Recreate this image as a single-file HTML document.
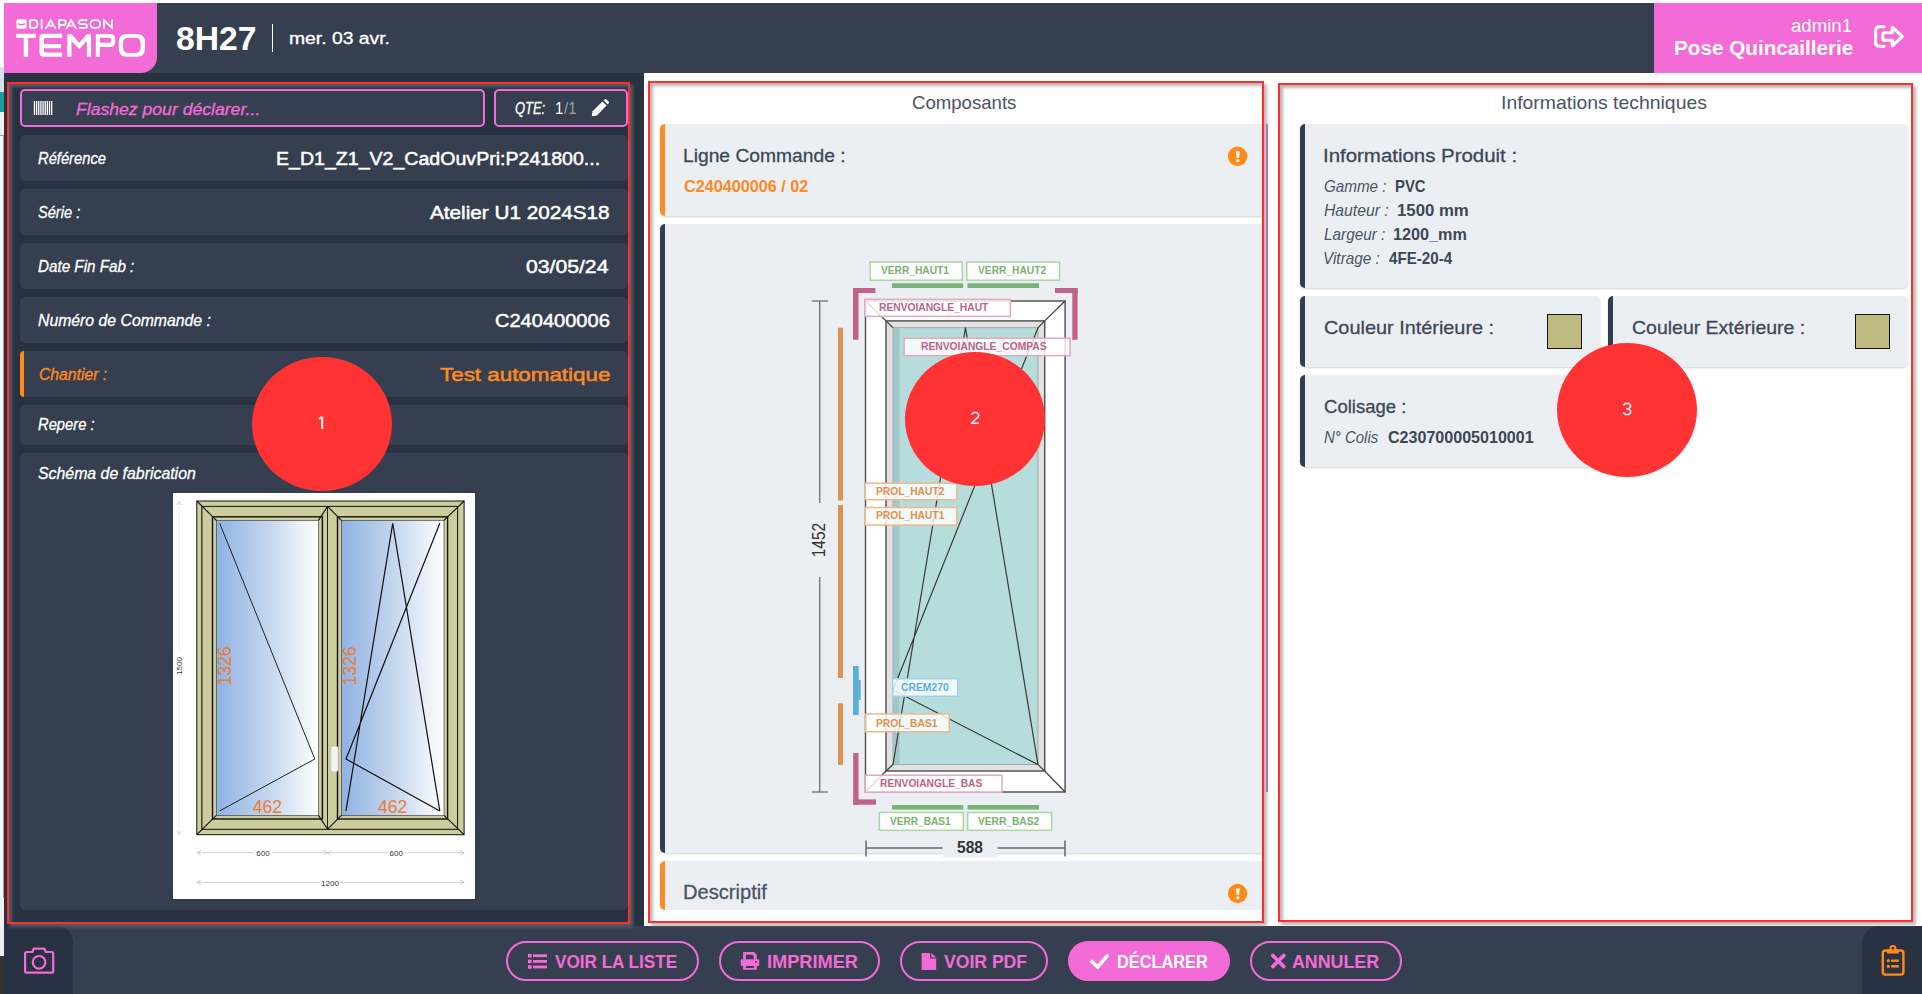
<!DOCTYPE html>
<html><head><meta charset="utf-8"><style>
html,body{margin:0;padding:0}
body{width:1922px;height:994px;position:relative;overflow:hidden;background:#fff;font-family:"Liberation Sans",sans-serif}
body>div,body>svg{position:absolute}
.t{position:absolute;white-space:nowrap;line-height:1;transform-origin:0 0}
</style></head><body>
<div style="left:0px;top:67px;width:4px;height:25px;background:#D6E0E8"></div><div style="left:0px;top:92px;width:4px;height:20px;background:#1B9BA1"></div><div style="left:0px;top:112px;width:4px;height:23px;background:linear-gradient(#F4F4F4,#EEEEEE)"></div><div style="left:-1px;top:135px;width:3px;height:763px;border:1px solid #9A9A9A;background:#fff"></div><div style="left:0px;top:898px;width:4px;height:34px;background:#F0F0F0"></div><div style="left:0px;top:932px;width:4px;height:24px;background:#EAF0F5"></div><div style="left:0px;top:956px;width:4px;height:38px;background:#333"></div><div style="left:4px;top:3px;width:1918px;height:70px;background:#363F4F"></div><div style="left:4px;top:3px;width:153px;height:70px;background:#F26BD6;border-bottom-right-radius:16px"></div><div style="left:1654px;top:3px;width:268px;height:70px;background:#F26BD6"></div><div style="left:272px;top:24px;width:1px;height:28px;background:#fff"></div><div style="left:4px;top:73px;width:640px;height:853px;background:#283241"></div><div style="left:644px;top:73px;width:1278px;height:853px;background:#fff"></div><div style="left:4px;top:926px;width:1918px;height:68px;background:#363F4F"></div><div style="left:4px;top:926px;width:69px;height:68px;background:#283241;border-top-right-radius:16px"></div><div style="left:1862px;top:926px;width:60px;height:68px;background:#283241;border-top-left-radius:18px"></div><div style="left:20px;top:89px;width:465px;height:38px;box-sizing:border-box;border:2px solid #F26BD6;border-radius:5px;background:#363F4F"></div><div style="left:494px;top:89px;width:134px;height:38px;box-sizing:border-box;border:2px solid #F26BD6;border-radius:5px;background:#363F4F"></div><div style="left:20px;top:135px;width:608px;height:46px;background:#363F4F;border-radius:5px"></div><div style="left:20px;top:189px;width:608px;height:46px;background:#363F4F;border-radius:5px"></div><div style="left:20px;top:243px;width:608px;height:46px;background:#363F4F;border-radius:5px"></div><div style="left:20px;top:297px;width:608px;height:46px;background:#363F4F;border-radius:5px"></div><div style="left:20px;top:351px;width:608px;height:46px;background:#363F4F;border-radius:5px"></div><div style="left:20px;top:405px;width:608px;height:40px;background:#363F4F;border-radius:5px"></div><div style="left:20px;top:453px;width:608px;height:457px;background:#363F4F;border-radius:5px"></div><div style="left:20px;top:351px;width:4px;height:46px;background:#FF8A1F;border-radius:5px 0 0 5px"></div><div style="left:173px;top:493px;width:302px;height:406px;background:#fff"></div><div style="left:660px;top:124px;width:602px;height:92px;background:#EBEFF3;box-shadow:0 1px 2px rgba(0,0,0,.18);border-radius:5px 0 0 5px"></div><div style="left:660px;top:124px;width:5px;height:92px;background:#FF8A1F;border-radius:5px 0 0 5px"></div><div style="left:660px;top:224px;width:602px;height:629px;background:#EBEFF3;box-shadow:0 1px 2px rgba(0,0,0,.18);border-radius:5px 0 0 5px"></div><div style="left:660px;top:224px;width:5px;height:629px;background:#333D4D;border-radius:5px 0 0 5px"></div><div style="left:660px;top:861px;width:602px;height:49px;background:#EBEFF3;border-radius:5px 0 0 5px"></div><div style="left:660px;top:861px;width:5px;height:49px;background:#FF8A1F;border-radius:5px 0 0 5px"></div><div style="left:1266px;top:124px;width:2px;height:668px;background:#D66AC2"></div><div style="left:1300px;top:124px;width:608px;height:164px;background:#EBEFF3;box-shadow:0 1px 2px rgba(0,0,0,.18);border-radius:5px"></div><div style="left:1300px;top:124px;width:5px;height:164px;background:#333D4D;border-radius:5px 0 0 5px"></div><div style="left:1300px;top:296px;width:300px;height:71px;background:#EBEFF3;box-shadow:0 1px 2px rgba(0,0,0,.18);border-radius:5px"></div><div style="left:1300px;top:296px;width:5px;height:71px;background:#333D4D;border-radius:5px 0 0 5px"></div><div style="left:1608px;top:296px;width:300px;height:71px;background:#EBEFF3;box-shadow:0 1px 2px rgba(0,0,0,.18);border-radius:5px"></div><div style="left:1608px;top:296px;width:5px;height:71px;background:#333D4D;border-radius:5px 0 0 5px"></div><div style="left:1300px;top:375px;width:300px;height:92px;background:#EBEFF3;box-shadow:0 1px 2px rgba(0,0,0,.18);border-radius:5px"></div><div style="left:1300px;top:375px;width:5px;height:92px;background:#333D4D;border-radius:5px 0 0 5px"></div><div style="left:1547px;top:314px;width:35px;height:35px;box-sizing:border-box;background:#BDBB80;border:1.5px solid #111"></div><div style="left:1855px;top:314px;width:35px;height:35px;box-sizing:border-box;background:#BDBB80;border:1.5px solid #111"></div><div style="left:506px;top:941px;width:193px;height:40px;box-sizing:border-box;border:2px solid #F26BD6;border-radius:20px"></div><div style="left:719px;top:941px;width:161px;height:40px;box-sizing:border-box;border:2px solid #F26BD6;border-radius:20px"></div><div style="left:900px;top:941px;width:148px;height:40px;box-sizing:border-box;border:2px solid #F26BD6;border-radius:20px"></div><div style="left:1068px;top:941px;width:162px;height:40px;background:#F26BD6;border-radius:20px"></div><div style="left:1250px;top:941px;width:152px;height:40px;box-sizing:border-box;border:2px solid #F26BD6;border-radius:20px"></div><svg style="left:0;top:0;position:absolute" width="1922" height="994" viewBox="0 0 1922 994"><defs><linearGradient id="gl" x1="0" x2="1" y1="0" y2="0"><stop offset="0" stop-color="#8FB2E3"/><stop offset="0.55" stop-color="#C9D9EF"/><stop offset="1" stop-color="#FFFFFF"/></linearGradient></defs><rect x="196.8" y="501" width="267.3" height="333.7" fill="#CDCC9C" stroke="#111" stroke-width="1"/><rect x="202" y="506.4" width="255.6" height="322.8" fill="#CDCC9C" stroke="#111" stroke-width="1"/><rect x="202" y="506.4" width="125.6" height="322.8" fill="#CDCC9C" stroke="#111" stroke-width="0.8"/><rect x="212.5" y="516.8" width="109.9" height="302.2" fill="#CDCC9C" stroke="#111" stroke-width="1.4"/><rect x="216.4" y="520.4" width="102.1" height="295" fill="url(#gl)" stroke="#333" stroke-width="0.6"/><rect x="327.6" y="506.4" width="130" height="322.8" fill="#CDCC9C" stroke="#111" stroke-width="0.8"/><rect x="337.5" y="516.8" width="110.1" height="302.2" fill="#CDCC9C" stroke="#111" stroke-width="1.4"/><rect x="341.4" y="520.4" width="102.6" height="295" fill="url(#gl)" stroke="#333" stroke-width="0.6"/><line x1="196.8" y1="501" x2="216.4" y2="520.4" stroke="#111" stroke-width="1.1"/><line x1="464.1" y1="501" x2="444" y2="520.4" stroke="#111" stroke-width="1.1"/><line x1="196.8" y1="834.7" x2="216.4" y2="815.4" stroke="#111" stroke-width="1.1"/><line x1="464.1" y1="834.7" x2="444" y2="815.4" stroke="#111" stroke-width="1.1"/><line x1="327.6" y1="506.4" x2="318.5" y2="520.4" stroke="#111" stroke-width="1.1"/><line x1="327.6" y1="506.4" x2="341.4" y2="520.4" stroke="#111" stroke-width="1.1"/><line x1="327.6" y1="829.2" x2="318.5" y2="815.4" stroke="#111" stroke-width="1.1"/><line x1="327.6" y1="829.2" x2="341.4" y2="815.4" stroke="#111" stroke-width="1.1"/><path d="M219.7 523.3 L314.8 759 L219.7 810.9" fill="none" stroke="#222" stroke-width="1"/><path d="M392.7 523.3 L346 810.9 M392.7 523.3 L439.8 810.9 M439.8 523.3 L346 759 L439.8 810.9" fill="none" stroke="#111" stroke-width="1.2"/><rect x="330.8" y="746" width="7.4" height="26" rx="3" fill="#F4F4F4" stroke="#C8C8C8" stroke-width="0.8"/><line x1="179.2" y1="501" x2="179.2" y2="834.7" stroke="#E6E6E6" stroke-width="0.7"/><g stroke="#BBBBBB" stroke-width="0.7" fill="none"><line x1="196.8" y1="852.7" x2="464.1" y2="852.7"/><line x1="196.8" y1="882.3" x2="464.1" y2="882.3"/><path d="M177 505 L179.2 501 L181.4 505 M177 830.7 L179.2 834.7 L181.4 830.7 M200.8 850.5 L196.8 852.7 L200.8 854.9 M460.1 850.5 L464.1 852.7 L460.1 854.9 M200.8 880.1 L196.8 882.3 L200.8 884.5 M460.1 880.1 L464.1 882.3 L460.1 884.5 M323.6 850.5 L327.6 852.7 L323.6 854.9 M331.6 850.5 L327.6 852.7 L331.6 854.9"/></g><rect x="254" y="849" width="18" height="7" fill="#fff"/><rect x="388" y="849" width="17" height="7" fill="#fff"/><rect x="320" y="878.5" width="20" height="7" fill="#fff"/><rect x="175.5" y="653" width="7" height="25" fill="#fff"/><g font-family="Liberation Sans" font-size="8" fill="#333"><text x="263" y="855.8" text-anchor="middle">600</text><text x="396.3" y="855.8" text-anchor="middle">600</text><text x="330" y="885.7" text-anchor="middle">1200</text><text transform="translate(181.8 666) rotate(-90)" text-anchor="middle">1500</text></g><g font-family="Liberation Sans" font-size="17.5" fill="#F07A2E"><text x="267.3" y="813" text-anchor="middle">462</text><text x="392.7" y="813" text-anchor="middle">462</text><text transform="translate(231 666) rotate(-90)" text-anchor="middle">1326</text><text transform="translate(356.4 666) rotate(-90)" text-anchor="middle">1326</text></g><g stroke="#777" stroke-width="1.4"><line x1="819.7" y1="301" x2="819.7" y2="503"/><line x1="819.7" y1="577" x2="819.7" y2="792"/><line x1="811.8" y1="301" x2="828" y2="301"/><line x1="811.8" y1="792" x2="828" y2="792"/></g><g fill="#E0914F"><rect x="838" y="327.7" width="5" height="172.8"/><rect x="838" y="505" width="5" height="173"/><rect x="838" y="703.3" width="5" height="61.7"/></g><g fill="#5AAEDC"><rect x="853" y="666" width="5.7" height="49"/><rect x="858.5" y="680" width="2.2" height="20"/></g><g fill="#C0628A"><rect x="853" y="288" width="5.5" height="51.8"/><rect x="853" y="288" width="22.4" height="5"/><rect x="1072.3" y="288" width="5.3" height="51.8"/><rect x="1055" y="288" width="22.6" height="5"/><rect x="853.2" y="753" width="5.3" height="51.7"/><rect x="853.2" y="799.4" width="22.8" height="5.3"/></g><g fill="#7DB37A"><rect x="892" y="283.2" width="71.2" height="4.8"/><rect x="967.5" y="283.2" width="71.5" height="4.8"/><rect x="892" y="805" width="71.3" height="4.6"/><rect x="967.5" y="805" width="71.5" height="4.6"/></g><rect x="865.5" y="301" width="199.6" height="491" fill="#fff" stroke="#555" stroke-width="1.5"/><rect x="886" y="320.9" width="158.7" height="450.1" fill="#E2E2E2" stroke="#555" stroke-width="1.5"/><rect x="893" y="327.7" width="145" height="436.9" fill="#B6DCDC" stroke="#9A9A9A" stroke-width="0.8"/><rect x="893.4" y="328.1" width="6.2" height="436.1" fill="#A2C7C7"/><line x1="865.5" y1="301" x2="886" y2="320.9" stroke="#444" stroke-width="1.3"/><line x1="1065.1" y1="301" x2="1044.7" y2="320.9" stroke="#444" stroke-width="1.3"/><line x1="865.5" y1="792" x2="886" y2="771" stroke="#444" stroke-width="1.3"/><line x1="1065.1" y1="792" x2="1044.7" y2="771" stroke="#444" stroke-width="1.3"/><line x1="886" y1="320.9" x2="893" y2="327.7" stroke="#444" stroke-width="1.3"/><line x1="1044.7" y1="320.9" x2="1038" y2="327.7" stroke="#444" stroke-width="1.3"/><line x1="886" y1="771" x2="893" y2="764.6" stroke="#444" stroke-width="1.3"/><line x1="1044.7" y1="771" x2="1038" y2="764.6" stroke="#444" stroke-width="1.3"/><path d="M965.5 327.7 L893 764.6 M965.5 327.7 L1038 764.6 M1038 327.7 L893 690 L1038 764.6" fill="none" stroke="#3A3A3A" stroke-width="1.2"/><rect x="870.15" y="262.05" width="92.10000000000002" height="18.19999999999999" fill="rgba(255,255,255,0.82)" stroke="#ACD5A5" stroke-width="1.5"/><rect x="966.75" y="262.05" width="92.79999999999995" height="18.19999999999999" fill="rgba(255,255,255,0.82)" stroke="#ACD5A5" stroke-width="1.5"/><rect x="864.75" y="299.35" width="145.70000000000005" height="17.0" fill="rgba(255,255,255,0.82)" stroke="#E3A9C2" stroke-width="1.5"/><rect x="904.15" y="338.25" width="165.89999999999998" height="17.399999999999977" fill="rgba(255,255,255,0.82)" stroke="#E3A9C2" stroke-width="1.5"/><rect x="865.05" y="483.15" width="91.80000000000007" height="16.600000000000023" fill="rgba(255,255,255,0.82)" stroke="#EDB98C" stroke-width="1.5"/><rect x="865.05" y="507.55" width="91.80000000000007" height="17.499999999999943" fill="rgba(255,255,255,0.82)" stroke="#EDB98C" stroke-width="1.5"/><rect x="892.65" y="678.75" width="65.0" height="17.5" fill="rgba(255,255,255,0.82)" stroke="#9FD0EE" stroke-width="1.5"/><rect x="865.75" y="713.95" width="83.5" height="17.799999999999955" fill="rgba(255,255,255,0.82)" stroke="#EDB98C" stroke-width="1.5"/><rect x="865.15" y="775.25" width="136.89999999999998" height="17.0" fill="rgba(255,255,255,0.82)" stroke="#E3A9C2" stroke-width="1.5"/><rect x="879.35" y="812.45" width="84.0" height="17.899999999999977" fill="rgba(255,255,255,0.82)" stroke="#ACD5A5" stroke-width="1.5"/><rect x="967.65" y="812.45" width="84.00000000000011" height="17.899999999999977" fill="rgba(255,255,255,0.82)" stroke="#ACD5A5" stroke-width="1.5"/><g stroke="#666" stroke-width="1.5"><line x1="866" y1="848" x2="1065" y2="848"/><line x1="866" y1="840.6" x2="866" y2="856.5"/><line x1="1065" y1="840.6" x2="1065" y2="856.5"/></g><rect x="942.6" y="838" width="55" height="19.5" fill="#EBEFF3"/><rect x="810" y="503" width="20" height="74" fill="#EBEFF3"/><text transform="translate(825.4 557.3) rotate(-90)" font-family="Liberation Sans" font-size="18" fill="#333" textLength="34.4" lengthAdjust="spacingAndGlyphs">1452</text><circle cx="1237.6" cy="156.3" r="9.7" fill="#FF8A1A"/><path d="M1235.9 151.3 H1239.8 L1239 157.9 H1236.7 Z" fill="#fff"/><circle cx="1237.8" cy="160.60000000000002" r="1.6" fill="#fff"/><circle cx="1237.6" cy="893.5" r="9.7" fill="#FF8A1A"/><path d="M1235.9 888.5 H1239.8 L1239 895.1 H1236.7 Z" fill="#fff"/><circle cx="1237.8" cy="897.8" r="1.6" fill="#fff"/><g fill="#fff"><path d="M16.1 33.8 H35.8 V38.1 H28.1 V56.8 H23.7 V38.1 H16.1 Z"/><path d="M62.1 33.8 V38.1 H45 Q43.9 38.1 43.9 39.2 V44 H61.1 V48.3 H43.9 V51.4 Q43.9 52.5 45 52.5 H62.1 V56.8 H43.5 Q39.5 56.8 39.5 52.8 V37.8 Q39.5 33.8 43.5 33.8 Z"/><path d="M67.3 56.7 L67.3 33.9 L71.5 33.9 L79.2 43 L86.9 33.9 L91.1 33.9 L91.1 56.7 L86.9 56.7 L86.9 41.1 L79.2 49.1 L71.5 41.1 L71.5 56.7 Z"/><path fill-rule="evenodd" d="M95.8 56.7 V33.9 H110.2 Q115.2 33.9 115.2 38.9 V42 Q115.2 47 110.2 47 H100 V56.7 Z M100 37.8 H109.3 Q111.3 37.8 111.3 39.8 V40.7 Q111.3 42.7 109.3 42.7 H100 Z"/><path fill-rule="evenodd" d="M127 33.9 H136.8 Q145 33.9 145 42.1 V48.6 Q145 56.8 136.8 56.8 H127 Q118.8 56.8 118.8 48.6 V42.1 Q118.8 33.9 127 33.9 Z M128.5 37.8 H135 Q140.5 37.8 140.5 43.3 V47.5 Q140.5 53 135 53 H128.5 Q123 53 123 47.5 V43.3 Q123 37.8 128.5 37.8 Z"/><rect x="16.4" y="19.2" width="10.1" height="9.6" rx="1.6"/></g><path d="M18.1 23.6 Q21.5 26 25 23.6" fill="none" stroke="#F26BD6" stroke-width="1.4"/><g fill="none" stroke="#fff" stroke-width="1.8" stroke-linejoin="miter"><path d="M30.1 20.1 H34.2 Q37.3 20.1 37.3 23.2 V24.8 Q37.3 27.9 34.2 27.9 H30.1 Z"/><path d="M41.65 19.2 V28.8"/><path d="M45.6 28.9 L50.65 20.2 L55.7 28.9 M47.7 25.6 H53.6"/><path d="M59.1 28.8 V20.1 H63.4 Q65.7 20.1 65.7 22.4 V22.7 Q65.7 25 63.4 25 H59.1"/><path d="M66.1 28.9 L71.15 20.2 L76.2 28.9 M68.2 25.6 H74.1"/><path d="M87.2 20.1 H81.3 Q79.1 20.1 79.1 22.2 Q79.1 24.1 81.3 24.1 H84.9 Q87.1 24.1 87.1 25.9 Q87.1 27.9 84.9 27.9 H78.9"/><rect x="90.5" y="20.1" width="9.6" height="7.8" rx="3.4"/><path d="M103.9 28.8 V20.3 L111.9 27.7 V19.2"/></g><g fill="none" stroke="#fff" stroke-width="3.1" stroke-linecap="round" stroke-linejoin="round"><path d="M1884.2 26.7 H1879.8 Q1875.6 26.7 1875.6 30.9 V42 Q1875.6 46.2 1879.8 46.2 H1884.2"/><path d="M1892.3 32.8 V27.2 L1902.3 36.5 L1892.3 45.8 V40.3 H1884.6 Q1882.8 40.3 1882.8 38.5 V34.6 Q1882.8 32.8 1884.6 32.8 Z"/></g><g fill="#fff"><rect x="33.80" y="101" width="1.3" height="14"/><rect x="35.95" y="101" width="1.3" height="14"/><rect x="38.10" y="101" width="1.3" height="14"/><rect x="40.25" y="101" width="1.3" height="14"/><rect x="42.40" y="101" width="1.3" height="14"/><rect x="44.55" y="101" width="1.3" height="14"/><rect x="46.70" y="101" width="1.3" height="14"/><rect x="48.85" y="101" width="1.3" height="14"/><rect x="51.00" y="101" width="1.3" height="14"/></g><g fill="#fff"><path d="M591.8 116.2 L592.6 111.2 L602.4 101.4 L606.6 105.6 L596.8 115.4 Z"/><path d="M603.6 100.2 L604.6 99.4 Q605.6 98.6 606.6 99.4 L608.6 101.4 Q609.4 102.4 608.6 103.4 L607.8 104.4 Z"/></g><g fill="none" stroke="#F26BD6" stroke-width="2.2" stroke-linejoin="round"><path d="M26.5 952 H32.5 L33.8 948.6 H44.4 L45.7 952 H51.8 Q53.2 952 53.2 953.4 V971.2 Q53.2 972.6 51.8 972.6 H26.5 Q25.1 972.6 25.1 971.2 V953.4 Q25.1 952 26.5 952 Z"/><circle cx="39.1" cy="962.3" r="6.3"/></g><g fill="none" stroke="#FF8A1A" stroke-width="2.4"><rect x="1882.8" y="950.5" width="20.6" height="24.1" rx="2.6"/></g><circle cx="1892.9" cy="948.6" r="2.5" fill="none" stroke="#FF8A1A" stroke-width="2"/><g fill="#FF8A1A"><path d="M1886.6 949.6 H1899.2 L1898.6 953.4 H1887.2 Z"/><circle cx="1888.3" cy="960.7" r="1.6"/><circle cx="1888.3" cy="966.3" r="1.6"/><rect x="1891.1" y="959.5" width="7.8" height="2.4"/><rect x="1891.1" y="965.1" width="7.8" height="2.4"/></g><circle cx="1892.9" cy="948.3" r="1.1" fill="#283241"/><g fill="#F26BD6"><rect x="528" y="953.9" width="3.6" height="3.6"/><rect x="528" y="959.6" width="3.6" height="3.6"/><rect x="528" y="965.2" width="3.6" height="3.6"/><rect x="533" y="954.3" width="14" height="2.8"/><rect x="533" y="960" width="14" height="2.8"/><rect x="533" y="965.6" width="14" height="2.8"/></g><g fill="#F26BD6"><path fill-rule="evenodd" d="M743.1 952 H754 L756.8 954.8 V959.4 H753.8 V956 L752.4 954.8 H746 V959.4 H743.1 Z"/><rect x="740.8" y="959.3" width="18.4" height="6.6" rx="1"/><path fill-rule="evenodd" d="M743.1 965 H756.8 V969.8 H743.1 Z M746 965.9 V967.9 H753.9 V965.9 Z"/></g><circle cx="756" cy="961.8" r="0.9" fill="#363F4F"/><g fill="#F26BD6"><path d="M921.6 953 H930.2 V958.6 H936.2 V969.4 Q936.2 970 935.6 970 H922.2 Q921.6 970 921.6 969.4 Z"/><path d="M931.4 953 L936.2 957.6 H931.4 Z"/></g><path d="M1091.8 961.5 L1097.6 967 L1107.2 955.8" fill="none" stroke="#fff" stroke-width="3.6" stroke-linecap="round" stroke-linejoin="round"/><path d="M1272.8 955.5 L1283.8 966.5 M1283.8 955.5 L1272.8 966.5" fill="none" stroke="#F26BD6" stroke-width="3.8" stroke-linecap="round"/></svg>
<div class="t" style="left:175.98px;top:22.07px;font-size:33px;color:#fff;font-weight:bold;transform:scaleX(1.0191);">8H27</div>
<div class="t" style="left:288.79px;top:31.46px;font-size:16px;color:#fff;transform:scaleX(1.2077);-webkit-text-stroke:0.3px #fff;">mer. 03 avr.</div>
<div class="t" style="left:1791.00px;top:17.46px;font-size:18px;color:#fff;transform:scaleX(1.0335);">admin1</div>
<div class="t" style="left:1674.34px;top:38.79px;font-size:19.5px;color:#fff;font-weight:bold;transform:scaleX(1.0605);">Pose Quincaillerie</div>
<div class="t" style="left:76.00px;top:100.81px;font-size:17px;color:#F26BD6;font-style:italic;transform:scaleX(1.0356);-webkit-text-stroke:0.3px #F26BD6;">Flashez pour déclarer...</div>
<div class="t" style="left:514.70px;top:99.61px;font-size:17px;color:#fff;font-style:italic;transform:scaleX(0.7610);-webkit-text-stroke:0.3px #fff;">QTE:</div>
<div class="t" style="left:555.12px;top:99.61px;font-size:17px;color:#fff;transform:scaleX(0.8750);">1</div>
<div class="t" style="left:563.50px;top:99.61px;font-size:17px;color:#9AA3AE;transform:scaleX(0.8744);">/1</div>
<div class="t" style="left:38.40px;top:150.03px;font-size:16.5px;color:#fff;font-style:italic;transform:scaleX(0.8927);-webkit-text-stroke:0.3px #fff;">Référence</div>
<div class="t" style="left:275.97px;top:149.42px;font-size:19px;color:#fff;transform:scaleX(1.0298);-webkit-text-stroke:0.5px #fff;">E_D1_Z1_V2_CadOuvPri:P241800...</div>
<div class="t" style="left:38.40px;top:203.63px;font-size:16.5px;color:#fff;font-style:italic;transform:scaleX(0.8853);-webkit-text-stroke:0.3px #fff;">Série :</div>
<div class="t" style="left:430.40px;top:203.32px;font-size:19px;color:#fff;transform:scaleX(1.0901);-webkit-text-stroke:0.5px #fff;">Atelier U1 2024S18</div>
<div class="t" style="left:38.40px;top:258.03px;font-size:16.5px;color:#fff;font-style:italic;transform:scaleX(0.9215);-webkit-text-stroke:0.3px #fff;">Date Fin Fab :</div>
<div class="t" style="left:526.40px;top:257.22px;font-size:19px;color:#fff;transform:scaleX(1.1144);-webkit-text-stroke:0.5px #fff;">03/05/24</div>
<div class="t" style="left:38.40px;top:311.83px;font-size:16.5px;color:#fff;font-style:italic;transform:scaleX(0.9568);-webkit-text-stroke:0.3px #fff;">Numéro de Commande :</div>
<div class="t" style="left:495.10px;top:311.12px;font-size:19px;color:#fff;transform:scaleX(1.0549);-webkit-text-stroke:0.5px #fff;">C240400006</div>
<div class="t" style="left:39.00px;top:366.03px;font-size:16.5px;color:#FF8A1F;font-style:italic;transform:scaleX(0.9528);-webkit-text-stroke:0.3px #FF8A1F;">Chantier :</div>
<div class="t" style="left:439.60px;top:364.62px;font-size:19px;color:#FF8A1F;transform:scaleX(1.1774);-webkit-text-stroke:0.5px #FF8A1F;">Test automatique</div>
<div class="t" style="left:38.40px;top:416.43px;font-size:16.5px;color:#fff;font-style:italic;transform:scaleX(0.8947);-webkit-text-stroke:0.3px #fff;">Repere :</div>
<div class="t" style="left:38.40px;top:464.53px;font-size:16.5px;color:#fff;font-style:italic;transform:scaleX(0.9610);-webkit-text-stroke:0.3px #fff;">Schéma de fabrication</div>
<div class="t" style="left:912.00px;top:93.02px;font-size:19px;color:#4A5465;transform:scaleX(0.9787);">Composants</div>
<div class="t" style="left:682.69px;top:145.62px;font-size:19px;color:#3D4757;transform:scaleX(1.0123);-webkit-text-stroke:0.3px #3D4757;">Ligne Commande :</div>
<div class="t" style="left:683.70px;top:177.83px;font-size:16.5px;color:#FF8A1F;font-weight:bold;transform:scaleX(0.9823);">C240400006 / 02</div>
<div class="t" style="left:682.82px;top:881.85px;font-size:20.5px;color:#4A5465;transform:scaleX(0.9819);-webkit-text-stroke:0.3px #4A5465;">Descriptif</div>
<div class="t" style="left:1501.08px;top:93.12px;font-size:19px;color:#4A5465;transform:scaleX(1.0208);">Informations techniques</div>
<div class="t" style="left:1322.52px;top:145.62px;font-size:19px;color:#3D4757;transform:scaleX(1.0751);-webkit-text-stroke:0.3px #3D4757;">Informations Produit :</div>
<div class="t" style="left:1323.60px;top:178.01px;font-size:17px;color:#4A5465;font-style:italic;transform:scaleX(0.8934);">Gamme :</div>
<div class="t" style="left:1394.62px;top:178.01px;font-size:17px;color:#3D4757;font-weight:bold;transform:scaleX(0.8759);">PVC</div>
<div class="t" style="left:1323.60px;top:202.11px;font-size:17px;color:#4A5465;font-style:italic;transform:scaleX(0.9245);">Hauteur :</div>
<div class="t" style="left:1396.71px;top:202.11px;font-size:17px;color:#3D4757;font-weight:bold;transform:scaleX(0.9852);">1500 mm</div>
<div class="t" style="left:1323.60px;top:226.11px;font-size:17px;color:#4A5465;font-style:italic;transform:scaleX(0.9017);">Largeur :</div>
<div class="t" style="left:1393.45px;top:226.11px;font-size:17px;color:#3D4757;font-weight:bold;transform:scaleX(0.9530);">1200_mm</div>
<div class="t" style="left:1322.70px;top:250.11px;font-size:17px;color:#4A5465;font-style:italic;transform:scaleX(0.9024);">Vitrage :</div>
<div class="t" style="left:1388.90px;top:250.11px;font-size:17px;color:#3D4757;font-weight:bold;transform:scaleX(0.8906);">4FE-20-4</div>
<div class="t" style="left:1323.50px;top:317.92px;font-size:19px;color:#3D4757;transform:scaleX(1.0461);-webkit-text-stroke:0.3px #3D4757;">Couleur Intérieure :</div>
<div class="t" style="left:1631.60px;top:317.52px;font-size:19px;color:#3D4757;transform:scaleX(1.0251);-webkit-text-stroke:0.3px #3D4757;">Couleur Extérieure :</div>
<div class="t" style="left:1323.50px;top:397.02px;font-size:19px;color:#3D4757;transform:scaleX(0.9758);-webkit-text-stroke:0.3px #3D4757;">Colisage :</div>
<div class="t" style="left:1323.50px;top:429.01px;font-size:17px;color:#4A5465;font-style:italic;transform:scaleX(0.8811);">N° Colis</div>
<div class="t" style="left:1387.50px;top:429.01px;font-size:17px;color:#3D4757;font-weight:bold;transform:scaleX(0.9451);">C230700005010001</div>
<div class="t" style="left:554.70px;top:952.12px;font-size:19px;color:#F26BD6;font-weight:bold;transform:scaleX(0.9018);">VOIR LA LISTE</div>
<div class="t" style="left:766.54px;top:952.12px;font-size:19px;color:#F26BD6;font-weight:bold;transform:scaleX(0.9578);">IMPRIMER</div>
<div class="t" style="left:943.50px;top:952.12px;font-size:19px;color:#F26BD6;font-weight:bold;transform:scaleX(0.9257);">VOIR PDF</div>
<div class="t" style="left:1116.54px;top:952.12px;font-size:19px;color:#fff;font-weight:bold;transform:scaleX(0.8594);">DÉCLARER</div>
<div class="t" style="left:1292.20px;top:952.12px;font-size:19px;color:#F26BD6;font-weight:bold;transform:scaleX(0.9381);">ANNULER</div>
<div class="t" style="left:880.70px;top:264.79px;font-size:11px;color:#7CB272;font-weight:bold;transform:scaleX(0.9272);">VERR_HAUT1</div>
<div class="t" style="left:978.00px;top:264.79px;font-size:11px;color:#7CB272;font-weight:bold;transform:scaleX(0.9286);">VERR_HAUT2</div>
<div class="t" style="left:879.00px;top:301.79px;font-size:11px;color:#C0628A;font-weight:bold;transform:scaleX(0.9318);">RENVOIANGLE_HAUT</div>
<div class="t" style="left:920.70px;top:340.59px;font-size:11px;color:#C0628A;font-weight:bold;transform:scaleX(0.9356);">RENVOIANGLE_COMPAS</div>
<div class="t" style="left:875.70px;top:485.69px;font-size:11px;color:#E0914F;font-weight:bold;transform:scaleX(0.9327);">PROL_HAUT2</div>
<div class="t" style="left:875.70px;top:510.19px;font-size:11px;color:#E0914F;font-weight:bold;transform:scaleX(0.9327);">PROL_HAUT1</div>
<div class="t" style="left:901.40px;top:681.99px;font-size:11px;color:#5AAEDC;font-weight:bold;transform:scaleX(0.9403);">CREM270</div>
<div class="t" style="left:875.60px;top:717.89px;font-size:11px;color:#E0914F;font-weight:bold;transform:scaleX(0.9302);">PROL_BAS1</div>
<div class="t" style="left:879.80px;top:778.09px;font-size:11px;color:#C0628A;font-weight:bold;transform:scaleX(0.9291);">RENVOIANGLE_BAS</div>
<div class="t" style="left:889.80px;top:816.09px;font-size:11px;color:#7CB272;font-weight:bold;transform:scaleX(0.9195);">VERR_BAS1</div>
<div class="t" style="left:978.00px;top:816.09px;font-size:11px;color:#7CB272;font-weight:bold;transform:scaleX(0.9256);">VERR_BAS2</div>
<div class="t" style="left:957.40px;top:839.76px;font-size:16px;color:#333;font-weight:bold;transform:scaleX(0.9703);">588</div>
<div style="left:7px;top:82px;width:623px;height:842px;box-sizing:border-box;border:2px solid #FF2E2E;box-shadow:3px 3px 3px rgba(125,125,125,.55), inset 3px 3px 3px rgba(125,125,125,.55)"></div><div style="left:648px;top:81px;width:616px;height:842px;box-sizing:border-box;border:2px solid #FF2E2E;box-shadow:3px 3px 3px rgba(125,125,125,.55), inset 3px 3px 3px rgba(125,125,125,.55)"></div><div style="left:1278px;top:83px;width:635px;height:839px;box-sizing:border-box;border:2px solid #FF2E2E;box-shadow:3px 3px 3px rgba(125,125,125,.55), inset 3px 3px 3px rgba(125,125,125,.55)"></div>
<div style="left:251.8px;top:356.8px;width:140px;height:134px;border-radius:50%;background:#FF3333"></div><div style="left:905px;top:352px;width:140px;height:134px;border-radius:50%;background:#FF3333"></div><div style="left:1556.8px;top:343px;width:140px;height:134px;border-radius:50%;background:#FF3333"></div><svg style="position:absolute;left:0;top:0" width="1922" height="994"><g fill="none" stroke="#fff" stroke-width="1.5" stroke-linejoin="round"><path d="M318.9 419 L321 417.4 H322.2 V429.1" stroke-width="1.9"/><path d="M971.4 414.5 L973.5 412.5 H976.6 L978.5 414.3 V416.5 L971.5 423.3 H979.1"/><path d="M1623.3 405.4 L1625.3 403.4 H1628.6 L1630.5 405.3 V406.7 L1628.6 408.7 H1626.2 M1628.6 408.7 L1630.5 410.7 V412.8 L1628.6 414.6 H1625.3 L1623.3 412.6"/></g></svg>

</body></html>
